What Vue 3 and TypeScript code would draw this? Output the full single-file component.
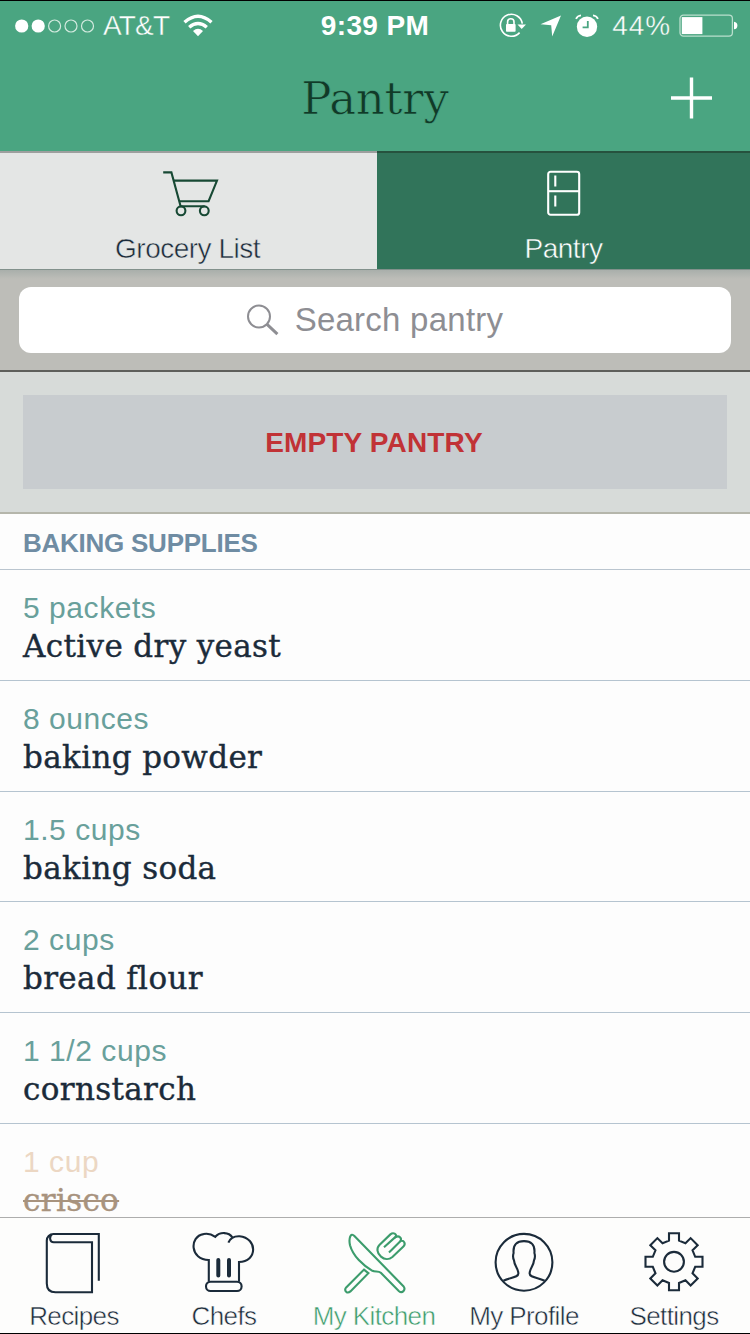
<script setup lang="ts">
interface PantryItem {
  qty: string
  name: string
  used?: boolean
}

interface NavItem {
  id: string
  label: string
  active?: boolean
}

const items: PantryItem[] = [
  { qty: '5 packets', name: 'Active dry yeast' },
  { qty: '8 ounces', name: 'baking powder' },
  { qty: '1.5 cups', name: 'baking soda' },
  { qty: '2 cups', name: 'bread flour' },
  { qty: '1 1/2 cups', name: 'cornstarch' },
  { qty: '1 cup', name: 'crisco', used: true },
]

const nav: NavItem[] = [
  { id: 'recipes', label: 'Recipes' },
  { id: 'chefs', label: 'Chefs' },
  { id: 'kitchen', label: 'My Kitchen', active: true },
  { id: 'profile', label: 'My Profile' },
  { id: 'settings', label: 'Settings' },
]

// Outline of the settings gear: eight square teeth around the centre.
const tooth: [number, number][] = [[-5, -21.2], [-5, -28.5], [5, -28.5], [5, -21.2]]
const gear: string = Array.from({ length: 8 }, (_, i) => {
  const a = (i * Math.PI) / 4
  return tooth
    .map(([x, y]) => {
      const px = 33 + x * Math.cos(a) - y * Math.sin(a)
      const py = 31.8 + x * Math.sin(a) + y * Math.cos(a)
      return `${px.toFixed(2)},${py.toFixed(2)}`
    })
    .join(' ')
}).join(' ')
</script>

<template>
  <div class="screen">
    <header class="top">
      <div class="status">
        <div class="status-left">
          <svg class="signal" width="82" height="16" viewBox="0 0 82 16">
            <circle cx="7.7" cy="8" r="6.6" fill="#fff" />
            <circle cx="24.2" cy="8" r="6.6" fill="#fff" />
            <g fill="none" stroke="#d3eadf" stroke-width="1.2">
              <circle cx="40.6" cy="8" r="6" />
              <circle cx="57" cy="8" r="6" />
              <circle cx="73.5" cy="8" r="6" />
            </g>
          </svg>
          <span class="carrier">AT&amp;T</span>
          <svg class="wifi" width="30" height="24" viewBox="0 0 30 24">
            <g fill="none" stroke="#fff" stroke-width="3.4">
              <path d="M1.5 8.2 Q15 -3.8 28.5 8.2" />
              <path d="M6.2 13.2 Q15 5.8 23.8 13.2" />
            </g>
            <path d="M10 17 Q15 12.4 20 17 L15 22.3 Z" fill="#fff" />
          </svg>
        </div>
        <span class="time">9:39 PM</span>
        <div class="status-right">
          <svg class="lock" width="28" height="26" viewBox="0 0 28 26">
            <path d="M20.6 19.6 A11 11 0 1 1 23.3 10.6" fill="none" stroke="#fff" stroke-width="1.6" />
            <path d="M18.5 11.5 H27 L22.7 16 Z" fill="#fff" />
            <rect x="7" y="11" width="9.6" height="7.8" rx="0.8" fill="#fff" />
            <path d="M8.6 11.5 V9 A3.2 3.2 0 0 1 15 9 V11.5" fill="none" stroke="#fff" stroke-width="1.6" />
          </svg>
          <svg class="arrow" width="22" height="22" viewBox="0 0 22 22">
            <path d="M21 0.5 L12.2 21.5 L11.2 10.2 L0.5 9.2 Z" fill="#fff" />
          </svg>
          <svg class="alarm" width="24" height="24" viewBox="0 0 24 24">
            <circle cx="12" cy="12.8" r="10.2" fill="#fff" />
            <path d="M1 4.8 Q2.5 1.6 6 1.3 M18 1.3 Q21.5 1.6 23 4.8" fill="none" stroke="#fff" stroke-width="1.8" />
            <path d="M12.8 7 V13.4 H7.6" fill="none" stroke="#4aa581" stroke-width="1.8" />
          </svg>
          <span class="percent">44%</span>
          <svg class="battery" width="59" height="24" viewBox="0 0 59 24">
            <rect x="1" y="1.1" width="52.4" height="21" rx="3.4" fill="none" stroke="#b9dfcd" stroke-width="1.3" />
            <rect x="2.8" y="3.1" width="20.6" height="17" fill="#fff" />
            <path d="M55 7.7 Q58.4 8.1 58.4 11.5 Q58.4 14.9 55 15.3 Z" fill="#fff" />
          </svg>
        </div>
      </div>
      <div class="titlebar">
        <h1>Pantry</h1>
        <svg class="plus" width="42" height="42" viewBox="0 0 42 42">
          <path d="M21.5 0.5 V41.5 M1 21 H42" stroke="#fff" stroke-width="3.4" />
        </svg>
      </div>
    </header>

    <div class="tabs">
      <div class="tab">
        <svg width="60" height="50" viewBox="0 0 60 50" fill="none" stroke="#174934" stroke-width="2.1">
          <path d="M4.2 4.4 H12.4 L21.6 38.2 H45.5" />
          <path d="M14.4 12.6 H58 L49.6 33.2 H20.4" />
          <circle cx="22" cy="42.8" r="4.4" />
          <circle cx="45.3" cy="42.8" r="4.4" />
        </svg>
        <span class="thin">Grocery List</span>
      </div>
      <div class="tab selected">
        <svg width="34" height="50" viewBox="0 0 34 50" fill="none" stroke="#fff" stroke-width="2.1">
          <rect x="1.2" y="3.8" width="31" height="43" rx="2.4" />
          <path d="M1.2 23.2 H32.2" />
          <path d="M8.3 7.6 V18.6 M8.3 27.6 V38.6" />
        </svg>
        <span class="thin">Pantry</span>
      </div>
    </div>

    <div class="search-bar">
      <div class="search">
        <svg width="32" height="32" viewBox="0 0 32 32" fill="none" stroke="#8e8e93">
          <circle cx="12" cy="12.5" r="11" stroke-width="2" />
          <path d="M19.8 20.2 L30.4 30.2" stroke-width="3" />
        </svg>
        <span>Search pantry</span>
      </div>
    </div>

    <div class="empty-wrap">
      <button class="empty" type="button">EMPTY PANTRY</button>
    </div>

    <main class="list">
      <h2>BAKING SUPPLIES</h2>
      <div v-for="item in items" :key="item.name" class="row" :class="{ used: item.used }">
        <div class="qty">{{ item.qty }}</div>
        <div class="name">{{ item.name }}</div>
      </div>
    </main>

    <nav class="nav">
      <a v-for="n in nav" :key="n.id" class="nav-item" :class="[n.id, { active: n.active }]">
        <svg width="66" height="66" viewBox="0 0 66 66" fill="none" stroke="currentColor" stroke-width="2.1">
          <path
            v-if="n.id === 'recipes'"
            d="M57.8 50.8 V4 H12.5 C8.5 4 5.8 7 5.8 10.5 V53.5 C5.8 59 9 62.3 14.5 62.3 H51 V12.3 H12.7 C8.4 12.3 8.2 6.5 11 4.2"
          />
          <template v-else-if="n.id === 'chefs'">
            <path d="M17.8 51.7 V30 C-1 30 -2 6.5 12.5 4.1 C17 3 21 4.5 24.3 6.8 C29 1.5 38 2 41.3 7.4" />
            <path d="M37.4 12.6 C39 8.5 43 6 48.5 6.2 C67 8 66.5 32 48 32 V51.7" />
            <rect x="15" y="51.7" width="35.6" height="9.3" rx="4.6" />
            <path d="M27.3 30 V45.6 M38 30 V45.6" stroke-width="4" stroke-linecap="round" />
          </template>
          <template v-else-if="n.id === 'kitchen'">
            <path d="M13.4 6 L62.4 56.2 C65.2 59.6 61.4 64 58 61.2 L39.8 42.8 C37.2 40.4 34.4 42.4 31.4 40.8 C22 35.5 12 26 9 15.2 C7.6 9 9.4 1.8 13.4 6 Z" />
            <path d="M23 39.6 L27.4 43.2 L9.4 61.4 C6.2 64.2 2.6 60.6 5.2 57.4 Z" />
            <path d="M40 26.6 C35.8 23.4 35.4 18 38.4 15 L49.4 4.4 C52.4 1.8 56 4.2 54.8 7 C58.2 5.2 61 8.2 59.6 11 C63.2 10 65 13.8 62.4 16.6 L51.4 27 C48 29.8 43.4 29.6 40 26.6 Z" />
            <path d="M43 17.2 L54.8 6.6 M48 22.6 L59.8 10.8" />
          </template>
          <template v-else-if="n.id === 'profile'">
            <circle cx="33" cy="32.3" r="28.4" />
            <path d="M12.4 50.8 C19 47.4 27.4 47.6 27.4 43.6 C27.4 38.4 23.4 36.4 23 30.4 C21.6 27.4 21.8 25.4 22.6 23 C21.8 14.6 26 11.1 33 11.1 C40 11.1 44.2 14.6 43.4 23 C44.2 25.4 44.4 27.4 43 30.4 C42.6 36.4 38.6 38.4 38.6 43.6 C38.6 47.6 47 47.4 53.6 50.8" />
          </template>
          <template v-else>
            <polygon :points="gear" />
            <circle cx="33" cy="31.8" r="9.9" />
          </template>
        </svg>
        <span class="thin">{{ n.label }}</span>
      </a>
    </nav>
  </div>
</template>

<style>
body {
  margin: 0;
}
</style>

<style scoped>
.screen {
  width: 750px;
  height: 1334px;
  box-sizing: border-box;
  border-top: 1px solid #000;
  border-bottom: 1px solid #000;
  display: flex;
  flex-direction: column;
  overflow: hidden;
  background: #fdfdfd;
  font-family: "Liberation Sans", Arial, sans-serif;
  color: #1b2b3a;
}

.top {
  height: 150px;
  flex: none;
  background: #4aa581;
  color: #fff;
}

.status {
  height: 49px;
  display: grid;
  grid-template-columns: 1fr auto 1fr;
  align-items: center;
  line-height: 32px;
}

.status-left,
.status-right {
  display: flex;
  align-items: center;
}

.status-left {
  padding-left: 14px;
}

.status-right {
  justify-content: flex-end;
  padding-right: 12px;
}

.carrier {
  margin-left: 7px;
  font-size: 28px;
  letter-spacing: -0.8px;
  -webkit-text-stroke: 0.4px #4aa581;
}

.wifi {
  margin-left: 14px;
}

.time {
  font-size: 28px;
  font-weight: 700;
  letter-spacing: 0.4px;
}

.arrow {
  margin-left: 13px;
}

.alarm {
  margin-left: 13px;
}

.percent {
  margin: 0 8px 0 13px;
  font-size: 28px;
  letter-spacing: 0.9px;
  -webkit-text-stroke: 0.4px #4aa581;
}

.titlebar {
  height: 96px;
  display: grid;
  grid-template-columns: 1fr auto 1fr;
  align-items: center;
}

h1 {
  grid-column: 2;
  margin: 0;
  padding-top: 2px;
  font: 400 45px/60px "DejaVu Serif", serif;
  letter-spacing: -0.3px;
  color: #113a28;
  -webkit-text-stroke: 0.7px #4aa581;
}

.plus {
  justify-self: end;
  margin: 0 38px 1px 0;
}

.tabs {
  height: 119px;
  flex: none;
  box-sizing: border-box;
  display: grid;
  grid-template-columns: 377px 1fr;
  border-bottom: 1px solid #82918c;
}

.tab {
  display: flex;
  flex-direction: column;
  align-items: center;
  padding-top: 15px;
  border-top: 2px solid #9d9f9e;
  background: #e4e6e5;
  font-size: 28px;
  line-height: 32px;
  letter-spacing: -0.5px;
}

.tab span {
  margin-top: 15px;
  padding-right: 2px;
}

.selected {
  background: #31745a;
  border-top-color: #26523e;
  color: #fff;
}

.selected span {
  padding-right: 0;
}

.thin {
  -webkit-text-stroke: 0.5px #e4e6e5;
}

.selected .thin {
  -webkit-text-stroke-color: #31745a;
}

.search-bar {
  height: 102px;
  flex: none;
  box-sizing: border-box;
  padding: 17px 19px 0;
  border-bottom: 2px solid #5e5f5b;
  background: linear-gradient(#a9afab, #bdbdb8 9px);
}

.search {
  height: 66px;
  display: flex;
  align-items: center;
  justify-content: center;
  gap: 16px;
  border-radius: 12px;
  background: #fff;
  color: #8e8e93;
  font-size: 33px;
  letter-spacing: 0.25px;
}

.empty-wrap {
  height: 142px;
  flex: none;
  box-sizing: border-box;
  padding: 23px 23px 0;
  border-bottom: 2px solid #b5b6ab;
  background: #d7dbd9;
}

.empty {
  display: block;
  width: 100%;
  height: 94px;
  border: 0;
  padding: 2px 2px 0 0;
  background: #c8cccf;
  color: #c13236;
  font: 700 28px "Liberation Sans", Arial, sans-serif;
  letter-spacing: 0.15px;
}

.list {
  flex: 1;
  min-height: 0;
  overflow: hidden;
}

h2 {
  height: 56px;
  box-sizing: border-box;
  margin: 0;
  padding-left: 23px;
  border-bottom: 1px solid #bac5cf;
  font-size: 26px;
  font-weight: 700;
  line-height: 59px;
  letter-spacing: -0.25px;
  color: #6f8ca3;
}

.row {
  height: 110.8px;
  box-sizing: border-box;
  padding: 19px 23px 0;
  border-bottom: 1px solid #b5c4d0;
}

.qty {
  font-size: 30px;
  line-height: 38px;
  letter-spacing: 0.55px;
  color: #69a09b;
}

.name {
  font: 400 31px/38px "DejaVu Serif", serif;
  letter-spacing: 0.35px;
  -webkit-text-stroke: 0.4px currentColor;
}

.used .qty {
  color: #ecd7c3;
}

.used .name {
  color: #a8937e;
  text-decoration: line-through;
  text-decoration-thickness: 2px;
}

.nav {
  height: 116px;
  flex: none;
  box-sizing: border-box;
  display: grid;
  grid-template-columns: repeat(5, 150px);
  margin-left: -1px;
  border-top: 1px solid #adadad;
  background: #fdfdfc;
}

.nav-item {
  display: flex;
  flex-direction: column;
  align-items: center;
  padding-top: 12px;
  font-size: 26px;
  line-height: 32px;
  letter-spacing: -0.6px;
}

.nav-item span {
  margin-top: 4px;
  -webkit-text-stroke-color: #fdfdfc;
}

.active {
  color: #3c9c6c;
}
</style>
